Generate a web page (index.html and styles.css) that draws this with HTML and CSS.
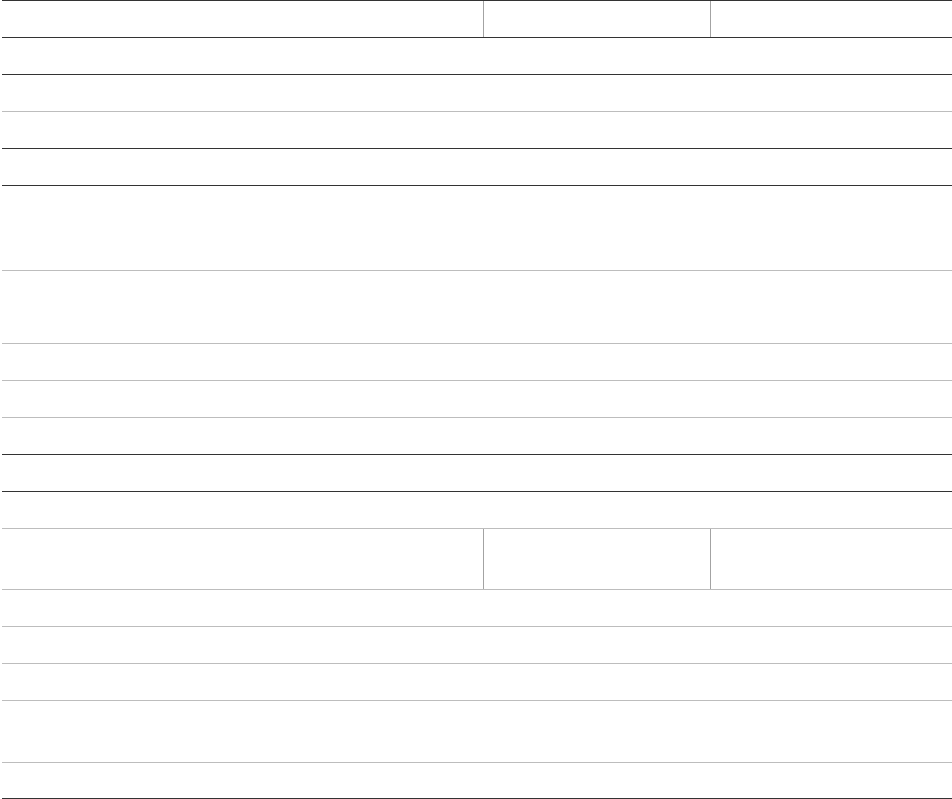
FILE: index.html
```html
<!DOCTYPE html>
<html lang="en">
<head>
<meta charset="utf-8">
<title>Table</title>
<link rel="stylesheet" href="styles.css">
</head>
<body>
<div class="table">
  <div class="row dark first split h38"><div class="cell"></div><div class="cell"></div><div class="cell"></div></div>
  <div class="row dark h37"></div>
  <div class="row light h37"></div>
  <div class="row dark h37"></div>
  <div class="row dark h37"></div>
  <div class="row light h85"></div>
  <div class="row light h73"></div>
  <div class="row light h37"></div>
  <div class="row light h37"></div>
  <div class="row dark h37"></div>
  <div class="row dark h37"></div>
  <div class="row light h37"></div>
  <div class="row light split h61"><div class="cell"></div><div class="cell"></div><div class="cell"></div></div>
  <div class="row light h37"></div>
  <div class="row light h37"></div>
  <div class="row light h37"></div>
  <div class="row light h62"></div>
  <div class="row dark h36"></div>
</div>
</body>
</html>
```

FILE: styles.css
```css
html, body {
  margin: 0;
  padding: 0;
  background: #ffffff;
  font-family: "Liberation Sans", Arial, sans-serif;
}
.table {
  margin-left: 2px;
  display: flex;
  flex-direction: column;
}
.row {
  box-sizing: border-box;
  border-bottom: 1px solid #bdbdbd;
}
.row.dark { border-bottom-color: #333333; }
.row.first { border-top: 1px solid #333333; }
.row.split {
  display: grid;
  grid-template-columns: 481px 227px 1fr;
}
.row.split .cell + .cell { border-left: 1px solid #a3a3a3; }
.h36 { height: 36px; }
.h37 { height: 37px; }
.h38 { height: 38px; }
.h61 { height: 61px; }
.h62 { height: 62px; }
.h73 { height: 73px; }
.h85 { height: 85px; }
```
